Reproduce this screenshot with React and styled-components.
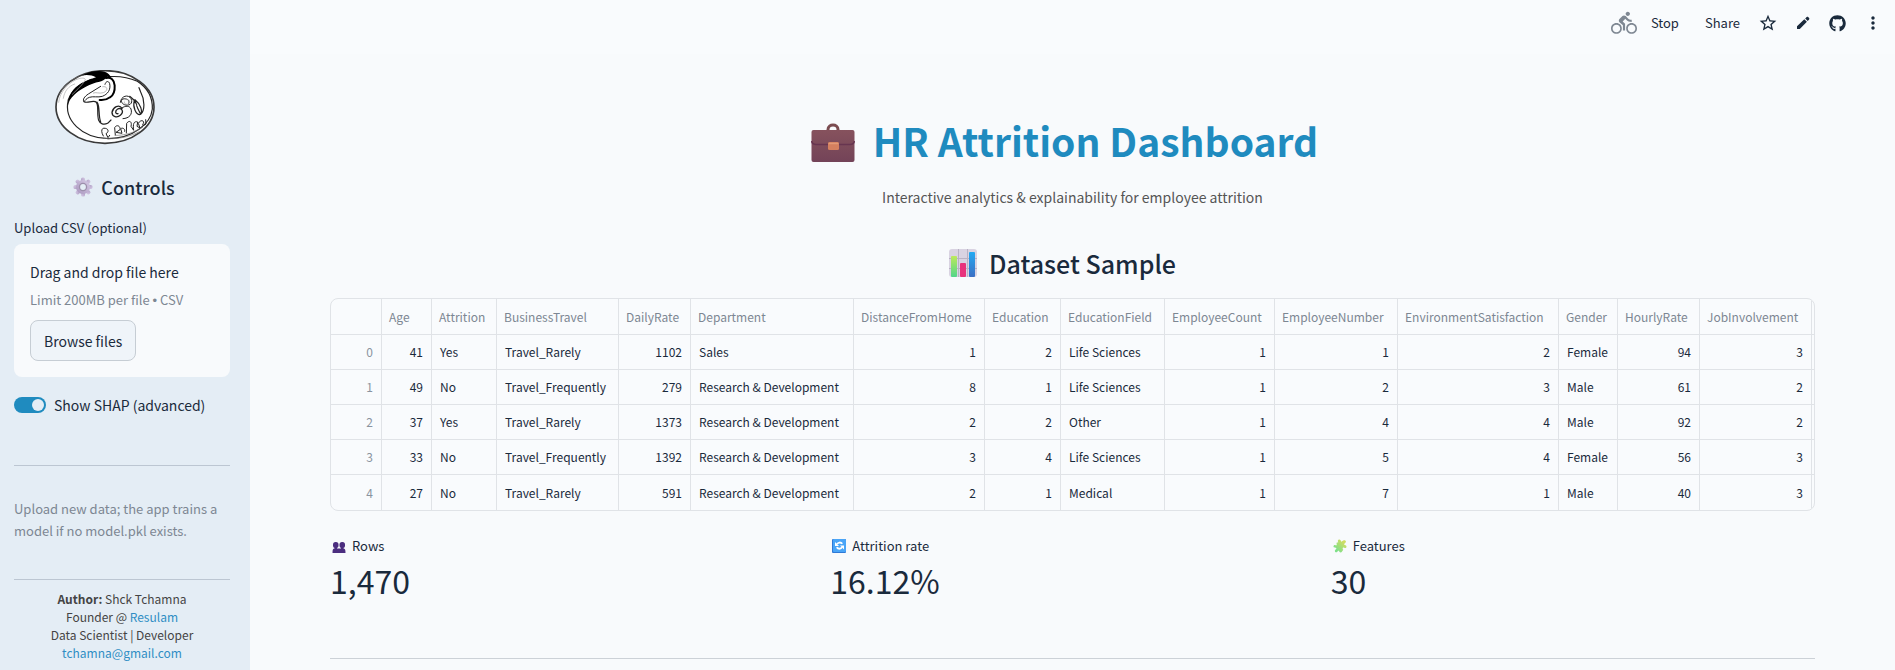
import React, { useState } from "react";
import styled, { createGlobalStyle } from "styled-components";
import { MdDirectionsBike, MdStarOutline, MdMoreVert } from "react-icons/md";
import { FaGithub } from "react-icons/fa";

const GlobalStyle = createGlobalStyle`
  *, *::before, *::after { box-sizing: border-box; }
  body {
    margin: 0;
    background: #f8fafc;
    color: #1a2a3c;
    font-family: "Noto Sans CJK SC", "Noto Sans", sans-serif;
    font-size: 14px;
  }
  h1, h2, p { margin: 0; }
  button, input { font: inherit; color: inherit; }
`;

const Page = styled.div`
  display: flex;
  min-height: 100vh;
`;

const Sidebar = styled.aside`
  flex: 0 0 250px;
  padding: 70px 20px 0 14px;
  background: #e4edf5;
`;

const LogoFrame = styled.div`
  padding-left: 41px;
  height: 75px;
`;

const ControlsHeading = styled.h2`
  display: flex;
  align-items: center;
  justify-content: center;
  gap: 8px;
  margin: 27px 0 16px;
  padding-left: 4px;
  font-size: 18px;
  font-weight: 500;
  line-height: 30px;
`;

const FieldLabel = styled.label`
  display: block;
  margin-bottom: 6px;
  font-size: 13px;
  line-height: 20px;
`;

const DropZone = styled.section`
  padding: 16px;
  border-radius: 8px;
  background: #f8fafc;
`;

const DropTitle = styled.p`
  line-height: 24px;
`;

const DropHint = styled.p`
  margin: 6px 0 10px;
  font-size: 13px;
  line-height: 20px;
  color: #7d8793;
`;

const Bullet = styled.span`
  font-family: "Liberation Sans", sans-serif;
  line-height: 1;
`;

const HiddenFile = styled.input`
  display: none;
`;

const BrowseButton = styled.button`
  display: block;
  height: 41px;
  padding: 0 13px;
  border: 1px solid #c6cdd4;
  border-radius: 8px;
  background: #eff4f9;
  line-height: 24px;
  cursor: pointer;
`;

const ToggleLabel = styled.label`
  display: flex;
  align-items: center;
  gap: 8px;
  margin-top: 16px;
  line-height: 24px;
  cursor: pointer;
`;

const Switch = styled.input`
  appearance: none;
  display: flex;
  align-items: center;
  justify-content: ${(p) => (p.checked ? "flex-end" : "flex-start")};
  width: 32px;
  height: 16px;
  margin: 0;
  padding: 0 2px;
  border-radius: 8px;
  background: ${(p) => (p.checked ? "#1f8bbf" : "#b9c4cf")};
  &::before {
    content: "";
    width: 12px;
    height: 12px;
    border-radius: 50%;
    background: #e4edf5;
  }
`;

const Rule = styled.hr`
  height: 1px;
  margin: ${(p) => p.$space} 0 0;
  border: 0;
  background: ${(p) => p.$color};
`;

const SidebarNote = styled.p`
  margin-top: 32px;
  font-size: 13px;
  line-height: 22px;
  color: #7d8793;
`;

const AuthorCard = styled.p`
  margin-top: 10px;
  font-size: 12px;
  line-height: 18px;
  text-align: center;
  color: #444;
`;

const Link = styled.a`
  color: #2f8dc4;
  text-decoration: none;
`;

const Main = styled.div`
  flex: 1;
  min-width: 0;
`;

const Toolbar = styled.header`
  display: flex;
  align-items: center;
  justify-content: flex-end;
  height: 54px;
  padding: 0 5px 8px 0;
  background: #f9fbfd;
`;

const Running = styled.span`
  display: flex;
  margin-right: 4px;
  color: #7f8893;
`;

const TextButton = styled.button`
  padding: 0 10px;
  border: 0;
  background: none;
  font-size: 13px;
  line-height: 24px;
  cursor: pointer;
  & + & { margin-left: 6px; }
`;

const IconButton = styled.button`
  display: flex;
  align-items: center;
  justify-content: center;
  width: 35px;
  height: 32px;
  padding: 0;
  border: 0;
  background: none;
  cursor: pointer;
`;

const Content = styled.main`
  padding: 59px 80px 8px;
`;

const Title = styled.h1`
  display: flex;
  align-items: center;
  justify-content: center;
  gap: 18px;
  padding-right: 16px;
  font-size: 39px;
  font-weight: 700;
  line-height: 54px;
  color: #1f8bbf;
  & > svg { margin-top: 6px; }
`;

const Subtitle = styled.p`
  margin: 18px 0 36px;
  line-height: 24px;
  text-align: center;
  color: #555;
`;

const SectionHeading = styled.h2`
  display: flex;
  align-items: center;
  justify-content: center;
  gap: 12px;
  padding-right: 20px;
  font-size: 25px;
  font-weight: 500;
  line-height: 36px;
`;

const TableFrame = styled.div`
  margin-top: 17px;
  overflow: hidden;
  border: 1px solid #e0e3e7;
  border-radius: 8px;
  background: #f9fbfd;
`;

const DataTable = styled.table`
  width: 100%;
  min-width: 1483px;
  table-layout: fixed;
  border-collapse: separate;
  border-spacing: 0;
  font-size: 12px;
  line-height: 20px;
  white-space: nowrap;
`;

const Column = styled.col`
  width: ${(p) => p.$width};
`;

const HeadCell = styled.th`
  height: 36px;
  padding: 0 8px 0 7px;
  border-right: 1px solid #e0e3e7;
  border-bottom: 1px solid #e0e3e7;
  font-weight: 400;
  text-align: left;
  color: #7d8793;
  &:last-child { padding: 0; border-right: 0; }
`;

const Cell = styled.td`
  height: 35px;
  padding: 0 8px;
  border-right: 1px solid #e0e3e7;
  border-bottom: 1px solid #e0e3e7;
  text-align: ${(p) => (p.$numeric ? "right" : "left")};
  &:last-child { padding: 0; border-right: 0; }
  tr:last-child > & { border-bottom: 0; }
`;

const IndexCell = styled(Cell).attrs({ as: "th", scope: "row" })`
  font-weight: 400;
  color: #8a949f;
`;

const Metrics = styled.section`
  display: grid;
  grid-template-columns: repeat(3, 1fr);
  gap: 16px;
  margin-top: 25px;
`;

const MetricLabel = styled.p`
  display: flex;
  align-items: center;
  gap: 6px;
  padding-left: 2px;
  font-size: 13px;
  line-height: 20px;
`;

const MetricValue = styled.p`
  margin-top: 2px;
  font-size: 32px;
  line-height: 44px;
`;

function Logo() {
  return (
    <svg width="100" height="75" viewBox="165 60 300 225" fill="none" stroke="#222" strokeLinecap="round" strokeLinejoin="round" role="img" aria-label="Resulam">
      <ellipse cx="315" cy="171" rx="147" ry="109" fill="#fff" stroke="#3a3a3a" strokeWidth="5" />
      <path d="M205 150C190 210 245 264 325 266C400 264 452 222 457 177C458 145 444 115 412 94C385 82 355 78 328 80" strokeWidth="3.5" />
      <path d="M205 150C215 118 245 99 274 88" strokeWidth="4" />
      <path d="M204 166C203 138 220 114 244 100C262 91 278 86 288 82C276 76 262 73 245 77C264 65 292 60 314 65C324 68 331 75 334 84L322 80C312 92 300 95 286 98C258 107 238 120 223 134C211 146 206 154 204 166Z" fill="#000" stroke="none" />
      <path d="M176 157C179 125 205 101 226 90C239 84 253 82 256 88C251 102 231 119 217 133M190 145C193 123 206 108 224 102" stroke="#aaa" strokeWidth="2" />
      <path d="M179 132C192 104 213 88 235 80" stroke="#777" strokeWidth="2" />
      <path d="M318 84C333 80 343 90 344 106C345 122 340 136 330 142C321 149 308 151 299 150" stroke="#000" strokeWidth="6" />
      <path d="M315 103C318 92 326 92 329 101C333 119 323 133 307 139C294 143 279 138 268 142C260 145 255 151 252 155C247 149 253 140 265 132L302 109" strokeWidth="3" />
      <path d="M308 110C323 107 326 122 310 128C297 132 287 125 280 129" stroke="#999" strokeWidth="2" />
      <path d="M252 155C262 161 274 151 286 155C299 160 289 190 296 211C300 222 311 225 323 220L333 210M291 156C301 170 294 194 302 216" strokeWidth="3.5" />
      <path d="M366 175C357 161 339 172 336 187C336 202 352 204 361 196C374 185 364 171 353 177C344 182 346 193 354 191" strokeWidth="4" />
      <path d="M366 174C376 166 389 167 393 177C398 193 388 205 369 206M361 157C363 137 385 132 393 146C401 161 386 169 373 164C364 160 361 150 369 147C379 144 391 151 386 160" strokeWidth="3" />
      <path d="M389 139C397 145 405 150 410 164M403 151C397 173 409 194 419 194C431 187 421 161 405 149M410 167C414 179 419 186 422 193C435 181 435 150 422 126L417 113" strokeWidth="3.5" />
      <path d="M375 149C383 145 391 150 389 159C382 166 372 163 373 156" stroke="#999" strokeWidth="2" />
      <path d="M310 258C301 243 305 232 316 235C327 237 326 247 318 251L324 263L329 256M346 255L344 233C350 222 362 228 360 239L348 247L366 250L362 236C369 232 376 237 374 244M379 249L380 220C388 209 397 215 393 229L401 241C398 222 402 212 413 216L411 229L420 234L415 220C421 209 432 210 431 219C424 227 430 228 438 222L437 209" strokeWidth="3" />
      <path d="M345 256C372 257 401 249 428 232M313 265C345 269 385 263 418 245" stroke="#777" strokeWidth="2" />
    </svg>
  );
}

function GearIcon() {
  const angles = [0, 45, 90, 135, 180, 225, 270, 315];
  return (
    <svg width="20" height="20" viewBox="0 0 20 20" aria-hidden="true">
      <defs>
        <linearGradient id="gear" x1="1" y1="0" x2="0" y2="1">
          <stop offset="0" stopColor="#d6cbe6" />
          <stop offset="1" stopColor="#a895bd" />
        </linearGradient>
      </defs>
      <g fill="url(#gear)">
        {angles.map((a) => (
          <rect key={a} x="8" y="0.5" width="4" height="6" rx="1.6" transform={`rotate(${a} 10 10)`} />
        ))}
        <circle cx="10" cy="10" r="7" />
      </g>
      <circle cx="10" cy="10" r="4.2" fill="#9c8fab" />
      <circle cx="10" cy="10" r="2.9" fill="#e4edf5" />
    </svg>
  );
}

function BriefcaseIcon() {
  return (
    <svg width="44" height="40" viewBox="0 0 44 40" aria-hidden="true">
      <defs>
        <linearGradient id="case" x1="0" y1="0" x2="0" y2="1">
          <stop offset="0" stopColor="#86525d" />
          <stop offset="1" stopColor="#734358" />
        </linearGradient>
      </defs>
      <path d="M17 8V6.500C17 0.500 27 0.500 27 6.500V8" fill="none" stroke="#7b4c50" strokeWidth="3" />
      <rect x="0.500" y="7" width="43" height="32" rx="2" fill="url(#case)" />
      <path d="M0.500 18C1 20 2 21.500 5 21.500H39C42 21.500 43 20 43.500 18" fill="none" stroke="#673550" strokeWidth="1.500" />
      <rect x="17" y="19" width="11" height="8" rx="1.500" fill="#d5805f" />
      <path d="M17.500 20.500H27.500" stroke="#e39a76" strokeWidth="1.500" />
    </svg>
  );
}

function ChartIcon() {
  return (
    <svg width="28" height="28" viewBox="0 0 28 28" aria-hidden="true">
      <defs>
        <linearGradient id="green" x1="0" y1="0" x2="0" y2="1">
          <stop offset="0" stopColor="#bde95b" />
          <stop offset="1" stopColor="#52d68a" />
        </linearGradient>
        <linearGradient id="blue" x1="0" y1="0" x2="0" y2="1">
          <stop offset="0" stopColor="#23aaf2" />
          <stop offset="1" stopColor="#3c6fc4" />
        </linearGradient>
      </defs>
      <rect width="28" height="28" rx="3" fill="#d9d3e2" />
      <path d="M9.500 0V28M18.500 0V28M0 9.500H28M0 19.500H28" stroke="#b9b2c4" />
      <rect x="2" y="7" width="6" height="21" rx="1" fill="url(#green)" />
      <rect x="11" y="14" width="6" height="14" rx="1" fill="#e8327c" />
      <rect x="20" y="3" width="6" height="25" rx="1" fill="url(#blue)" />
    </svg>
  );
}

function PencilIcon() {
  return (
    <svg width="14" height="14" viewBox="0 0 14 14" fill="currentColor" aria-hidden="true">
      <path d="M1 13V10.200L8.300 3.200L10.900 5.800L3.800 13ZM9.200 2.400L10.700 1C11.200 0.600 11.700 0.600 12.100 1L13.100 2C13.500 2.400 13.500 2.900 13.100 3.400L11.700 4.900Z" />
    </svg>
  );
}

function PeopleIcon() {
  return (
    <svg width="14" height="14" viewBox="0 0 14 14" fill="#4b2d7f" aria-hidden="true">
      <rect x="1" y="3" width="5.500" height="6" rx="2.500" />
      <rect x="7.500" y="3" width="5.500" height="6" rx="2.500" />
      <path d="M2.500 8H5V9.500H9V8H11.500V9.500C13 9.500 13.500 10.500 13.500 14H0.500C0.500 10.500 1 9.500 2.500 9.500Z" />
    </svg>
  );
}

function RepeatIcon() {
  return (
    <svg width="14" height="14" viewBox="0 0 14 14" fill="none" aria-hidden="true">
      <rect width="14" height="14" rx="1" fill="#2f79d6" />
      <rect x="1" width="13" height="13" rx="1" fill="#4aa5f7" />
      <path d="M10.300 4.800C8.800 2.900 6 3.200 5 5.200M4.700 8.200C6.200 10.300 9 10.200 10 8.200" stroke="#fff" strokeWidth="1.800" />
      <path d="M3 3V7H7ZM12 10.500V6.500H8Z" fill="#fff" />
    </svg>
  );
}

function PuzzleIcon() {
  return (
    <svg width="14" height="14" viewBox="0 0 14 14" aria-hidden="true">
      <defs>
        <linearGradient id="puzzle" x1="1" y1="0" x2="0" y2="1">
          <stop offset="0.200" stopColor="#cfdc62" />
          <stop offset="0.800" stopColor="#7fe08a" />
        </linearGradient>
      </defs>
      <g fill="url(#puzzle)">
        <path d="M3.500 3.800L5.300 3.300C3.800 1.300 6.300-0.500 7.600 1.200L8.200 2.800L10.300 1.500C13 0.700 13.800 3.300 11.800 4.300L11 5.500L13 6.500C14.500 8.300 12.200 10 11 8.500C9.300 8.500 9.300 10 10.300 10.800L8.500 13.300C6.500 14 6.200 11.800 5.200 11.500C4.300 14.300 1.200 13.500 2 11.200L3.500 9.500C2.500 8 0.500 9.500 0.500 7.300C1 5 2.800 6.500 3.800 6.300Z" />
      </g>
    </svg>
  );
}

const columns = [
  { name: "Age", width: "50px", numeric: true },
  { name: "Attrition", width: "65px" },
  { name: "BusinessTravel", width: "122px" },
  { name: "DailyRate", width: "72px", numeric: true },
  { name: "Department", width: "163px" },
  { name: "DistanceFromHome", width: "131px", numeric: true },
  { name: "Education", width: "76px", numeric: true },
  { name: "EducationField", width: "104px" },
  { name: "EmployeeCount", width: "110px", numeric: true },
  { name: "EmployeeNumber", width: "123px", numeric: true },
  { name: "EnvironmentSatisfaction", width: "161px", numeric: true },
  { name: "Gender", width: "59px" },
  { name: "HourlyRate", width: "82px", numeric: true },
  { name: "JobInvolvement", width: "112px", numeric: true },
];

const rows = [
  [41, "Yes", "Travel_Rarely", 1102, "Sales", 1, 2, "Life Sciences", 1, 1, 2, "Female", 94, 3],
  [49, "No", "Travel_Frequently", 279, "Research & Development", 8, 1, "Life Sciences", 1, 2, 3, "Male", 61, 2],
  [37, "Yes", "Travel_Rarely", 1373, "Research & Development", 2, 2, "Other", 1, 4, 4, "Male", 92, 2],
  [33, "No", "Travel_Frequently", 1392, "Research & Development", 3, 4, "Life Sciences", 1, 5, 4, "Female", 56, 3],
  [27, "No", "Travel_Rarely", 591, "Research & Development", 2, 1, "Medical", 1, 7, 1, "Male", 40, 3],
];

const metrics = [
  { label: "Rows", value: "1,470", Icon: PeopleIcon },
  { label: "Attrition rate", value: "16.12%", Icon: RepeatIcon },
  { label: "Features", value: "30", Icon: PuzzleIcon },
];

export default function App() {
  const [shap, setShap] = useState(true);
  return (
    <Page>
      <GlobalStyle />
      <Sidebar>
        <LogoFrame><Logo /></LogoFrame>
        <ControlsHeading><GearIcon />Controls</ControlsHeading>
        <FieldLabel htmlFor="csv">Upload CSV (optional)</FieldLabel>
        <DropZone>
          <DropTitle>Drag and drop file here</DropTitle>
          <DropHint>Limit 200MB per file <Bullet>•</Bullet> CSV</DropHint>
          <HiddenFile id="csv" type="file" accept=".csv" />
          <BrowseButton type="button" onClick={() => document.getElementById("csv").click()}>Browse files</BrowseButton>
        </DropZone>
        <ToggleLabel>
          <Switch type="checkbox" role="switch" checked={shap} onChange={(e) => setShap(e.target.checked)} />
          Show SHAP (advanced)
        </ToggleLabel>
        <Rule $space="48px" $color="#bcc6d2" />
        <SidebarNote>Upload new data; the app trains a model if no model.pkl exists.</SidebarNote>
        <Rule $space="37px" $color="#bcc6d2" />
        <AuthorCard>
          <b>Author:</b> Shck Tchamna<br />
          Founder @ <Link href="#resulam">Resulam</Link><br />
          Data Scientist | Developer<br />
          <Link href="mailto:tchamna@gmail.com">tchamna@gmail.com</Link>
        </AuthorCard>
      </Sidebar>
      <Main>
        <Toolbar>
          <Running><MdDirectionsBike size={26} /></Running>
          <TextButton type="button">Stop</TextButton>
          <TextButton type="button">Share</TextButton>
          <IconButton type="button" aria-label="Favorite"><MdStarOutline size={20} /></IconButton>
          <IconButton type="button" aria-label="Edit"><PencilIcon /></IconButton>
          <IconButton type="button" aria-label="View on GitHub"><FaGithub size={17} /></IconButton>
          <IconButton type="button" aria-label="More options"><MdMoreVert size={20} /></IconButton>
        </Toolbar>
        <Content>
          <Title><BriefcaseIcon />HR Attrition Dashboard</Title>
          <Subtitle>Interactive analytics &amp; explainability for employee attrition</Subtitle>
          <SectionHeading><ChartIcon />Dataset Sample</SectionHeading>
          <TableFrame>
            <DataTable>
              <colgroup>
                <Column $width="51px" />
                {columns.map((c) => <Column key={c.name} $width={c.width} />)}
                <Column $width="auto" />
              </colgroup>
              <thead>
                <tr>
                  <HeadCell />
                  {columns.map((c) => <HeadCell key={c.name} scope="col">{c.name}</HeadCell>)}
                  <HeadCell />
                </tr>
              </thead>
              <tbody>
                {rows.map((row, i) => (
                  <tr key={i}>
                    <IndexCell $numeric>{i}</IndexCell>
                    {row.map((v, j) => <Cell key={j} $numeric={columns[j].numeric}>{v}</Cell>)}
                    <Cell />
                  </tr>
                ))}
              </tbody>
            </DataTable>
          </TableFrame>
          <Metrics>
            {metrics.map(({ label, value, Icon }) => (
              <div key={label}>
                <MetricLabel><Icon />{label}</MetricLabel>
                <MetricValue>{value}</MetricValue>
              </div>
            ))}
          </Metrics>
          <Rule $space="56px" $color="#ccd1d7" />
        </Content>
      </Main>
    </Page>
  );
}
